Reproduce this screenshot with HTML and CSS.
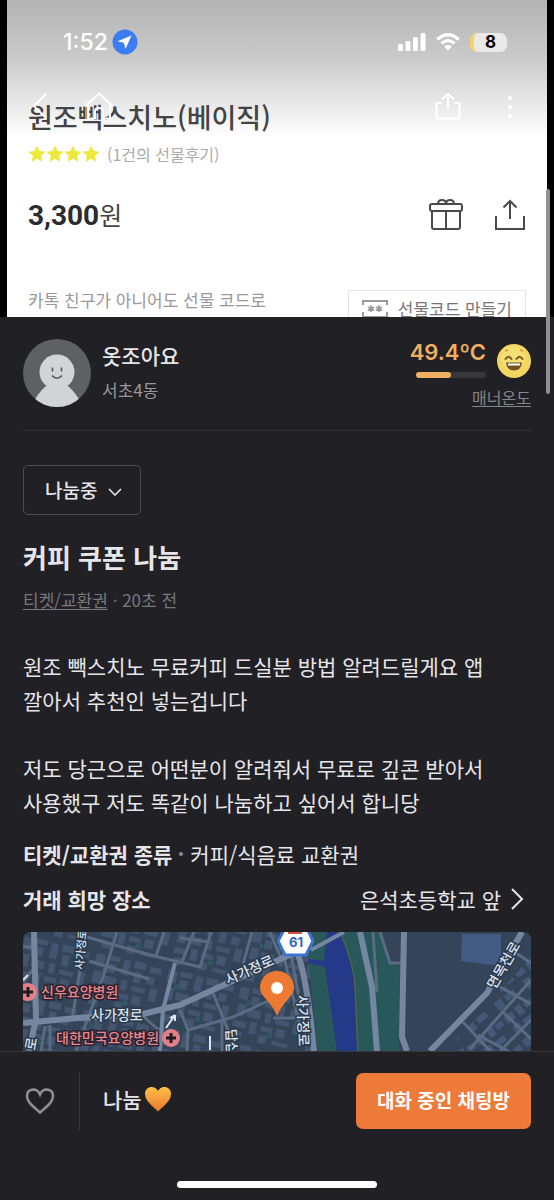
FILE: index.html
```html
<!DOCTYPE html>
<html lang="ko">
<head>
<meta charset="utf-8">
<meta name="viewport" content="width=device-width, initial-scale=1">
<title>커피 쿠폰 나눔</title>
<link rel="stylesheet" href="styles.css">
</head>
<body>
<div class="app">
  <section class="hero">
    <div class="product">
      <h2 class="product-name">원조빽스치노(베이직)</h2>
      <div class="rating">
        <svg class="stars" width="72" height="18" viewBox="0 0 72 18" aria-label="별점 4개">
          <defs><path id="star" d="M9 .5l2.600 5.400 5.900.8-4.300 4.100 1.100 5.900L9 13.800l-5.300 2.900 1.100-5.900L.5 6.700l5.900-.8z"/></defs>
          <g fill="#ece83c"><use href="#star"/><use href="#star" x="18"/><use href="#star" x="36"/><use href="#star" x="54"/></g>
        </svg>
        <span>(1건의 선물후기)</span>
      </div>
      <div class="price-row">
        <p class="price"><b>3,300</b>원</p>
        <svg width="36" height="34" viewBox="0 0 36 34" fill="none" stroke="#4a4a4a" stroke-width="2" aria-hidden="true">
          <rect x="2" y="6" width="32" height="7" rx="2"/><path d="M4 13v16q0 2 2 2h24q2 0 2-2V13M18 13v18M10 6q0-4 4-4t4 4q0-4 4-4t4 4"/>
        </svg>
        <svg class="upload" width="32" height="34" viewBox="0 0 32 34" fill="none" stroke="#4a4a4a" stroke-width="2" aria-hidden="true">
          <path d="M2 18v13h28V18M16 21V3M9.500 9.500L16 3l6.500 6.500"/>
        </svg>
      </div>
      <div class="code-row">
        <p class="code-text">카톡 친구가 아니어도 선물 코드로</p>
        <button class="code-button" type="button">
          <svg width="26" height="20" viewBox="0 0 26 20" fill="none" stroke="#999" stroke-width="2" aria-hidden="true">
            <path d="M1 6V2h24v4M1 13v5h24v-5"/><path d="M9 6v7M6 8l6 3.500M12 8l-6 3.500M17 6v7M14 8l6 3.500M20 8l-6 3.500" stroke-width="1.500"/>
          </svg>
          선물코드 만들기
        </button>
      </div>
    </div>
    <header class="overlay">
      <div class="status">
        <span class="clock">1:52</span>
        <svg width="26" height="26" viewBox="0 0 26 26" aria-hidden="true"><circle cx="13" cy="13" r="12.500" fill="#3b7cf0"/><path d="M19.500 6.500L5.500 12.300l6.300 1.500 1.700 6.200z" fill="#fff"/></svg>
        <span class="spacer"></span>
        <svg width="28" height="18" viewBox="0 0 28 18" fill="#fff" aria-hidden="true"><rect y="11" width="5" height="7" rx="1.500"/><rect x="7.500" y="8" width="5" height="10" rx="1.500"/><rect x="15" y="4" width="5" height="14" rx="1.500"/><rect x="22.500" y="0" width="5" height="18" rx="1.500"/></svg>
        <svg class="wifi" width="24" height="18" viewBox="0 0 24 18" fill="none" stroke="#fff" stroke-width="3.200" aria-hidden="true"><path d="M1.300 6.500Q12-3 22.700 6.500M5.500 10.500Q12 4.800 18.500 10.500"/><path d="M8.200 13.300Q12 10.300 15.800 13.300L12 17.500z" fill="#fff" stroke="none"/></svg>
        <span class="battery">8</span>
      </div>
      <nav class="toolbar">
        <button class="icon-button" type="button" aria-label="뒤로"><svg width="20" height="28" viewBox="0 0 20 28"><path d="M16 2L4 14l12 12"/></svg></button>
        <button class="icon-button home" type="button" aria-label="홈"><svg width="30" height="28" viewBox="0 0 30 28"><path d="M1.500 14L15 1.500 28.500 14M4 12v14.500h7V19q0-3 4-3t4 3v7.500h7V12"/></svg></button>
        <span class="spacer"></span>
        <button class="icon-button" type="button" aria-label="공유"><svg width="26" height="28" viewBox="0 0 26 28"><path d="M7 11H1.500v15.500h23V11H19M13 17V2M7 7.500L13 2l6 5.500"/></svg></button>
        <button class="icon-button more" type="button" aria-label="더보기"><svg width="6" height="28" viewBox="0 0 6 28"><g fill="#fff" stroke="none"><circle cx="3" cy="6" r="2"/><circle cx="3" cy="15" r="2"/><circle cx="3" cy="24" r="2"/></g></svg></button>
      </nav>
    </header>
  </section>

  <main class="content">
    <section class="seller">
      <svg class="avatar" width="68" height="68" viewBox="0 0 68 68" role="img" aria-label="프로필">
        <defs><clipPath id="face"><circle cx="34" cy="34" r="34"/></clipPath></defs>
        <g clip-path="url(#face)"><rect width="68" height="68" fill="#5e6164"/><circle cx="34" cy="33" r="17.500" fill="#d2d3d6"/><path d="M10 64Q15 54 23 47h22q8 7 13 17v6H10z" fill="#d2d3d6"/></g>
        <path d="M29.500 28.500v4M38.500 28.500v4M29 36.500q5 5.500 10 0" fill="none" stroke="#55575a" stroke-width="1.600"/>
      </svg>
      <div class="who"><strong class="nick">옷조아요</strong><span class="area">서초4동</span></div>
      <div class="manner">
        <div class="temp-row">
          <div class="temp"><span class="degree">49.4ºC</span><div class="meter"><div class="meter-fill" style="width:50%"></div></div></div>
          <svg class="mood" width="34" height="36" viewBox="0 0 34 36" role="img" aria-label="웃는 얼굴">
            <circle cx="17" cy="18" r="17" fill="#f3d662"/><circle cx="16" cy="15" r="12" fill="#f9e58a" opacity=".5"/>
            <path d="M8.500 16q3-4.500 6 0M19.500 16q3-4.500 6 0" fill="none" stroke="#7c5b20" stroke-width="2" stroke-linecap="round"/>
            <path d="M9 19.500h16q-1 8-8 8t-8-8z" fill="#75521c"/><path d="M11 20.500h12v2H11z" fill="#fff"/>
            <path d="M8 8l3-1M23 7l3 1" stroke="#c99c3b" stroke-width="1.500"/>
          </svg>
        </div>
        <a class="manner-link" href="#">매너온도</a>
      </div>
    </section>

    <div class="state">
      <select class="state-select" aria-label="거래 상태"><option>나눔중</option><option>예약중</option></select>
      <svg class="state-arrow" width="14" height="8" viewBox="0 0 14 8" aria-hidden="true"><path d="M1 1l6 6 6-6" fill="none" stroke="#e6e6ea" stroke-width="1.600"/></svg>
    </div>
    <h1 class="title">커피 쿠폰 나눔</h1>
    <p class="meta"><a class="category" href="#">티켓/교환권</a> · 20초 전</p>
    <div class="body-text">
      <p>원조 빽스치노 무료커피 드실분 방법 알려드릴게요 앱<br>깔아서 추천인 넣는겁니다</p>
      <p>저도 당근으로 어떤분이 알려줘서 무료로 깊콘 받아서<br>사용했구 저도 똑같이 나눔하고 싶어서 합니당</p>
    </div>
    <p class="detail"><b>티켓/교환권 종류</b><i class="dot"></i><span>커피/식음료 교환권</span></p>
    <div class="detail place">
      <b>거래 희망 장소</b>
      <a class="place-link" href="#">은석초등학교 앞<svg width="14" height="22" viewBox="0 0 14 22" aria-hidden="true"><path d="M2 1l10 10L2 21" fill="none" stroke="#e6e6ea" stroke-width="2"/></svg></a>
    </div>
    <svg class="map" viewBox="0 0 508 119" preserveAspectRatio="xMidYMin slice" role="img" aria-label="거래 희망 장소 지도">
      <defs>
        <pattern id="blocks" width="74" height="58" patternUnits="userSpaceOnUse" patternTransform="rotate(13)">
          <path d="M3 4h9v12H3zM15 3h12v5H15zM16 11h8v9h-8zM31 4h7v15h-7zM42 3h12v7H42zM44 13h7v11h-7zM58 5h12v6H58zM57 15h8v8h-8zM4 21h8v12H4zM15 24h13v8H15zM33 24h6v10h-6zM44 28h14v5H44zM63 26h7v13h-7zM3 38h13v6H3zM20 36h7v12h-7zM31 38h12v5H31zM47 37h9v9h-9zM5 48h9v7H5zM31 47h8v8h-8zM45 50h16v4H45z" fill="#445570"/>
          <path d="M12 16h3v5h-3zM39 44h5v4h-5z" fill="#2d5b5f"/>
        </pattern>
        <pattern id="houses" width="36" height="30" patternUnits="userSpaceOnUse" patternTransform="rotate(-38)"><path d="M2 3h10v8H2zM16 2h7v10h-7zM26 4h8v6h-8zM3 16h8v10H3zM15 17h12v6H15z" fill="#46587a"/></pattern>
      </defs>
      <rect width="508" height="119" fill="#354559"/>
      <rect width="288" height="119" fill="url(#blocks)"/>
      <path d="M508 25L430 112V119H508z" fill="url(#houses)"/>
      <path d="M439 2h39v18l2 14-42-5z" fill="#435c84"/>
      <path d="M283 0H357L367 31 377 35 376 119H295L287 40z" fill="#28585a"/>
      <path d="M304 0h13q14 32 15 55l2 64h-20L302 35l-17-4v-4l16 2z" fill="#243a88"/>
      <path d="M317 0q14 32 15 55l3 64" fill="none" stroke="#52634c" stroke-width="1.500"/>
      <g fill="none" stroke="#596c83" stroke-width="3">
        <path d="M94 0L80 45 53 119M64 5l63 18 50 12L188 0M141 0l-8 24M171 0l-12 30M157 6l29 4M229 0l-9 32M57 38L49 88M66 29l60 18M27 119V93M0 15h10M0 50l12-15M157 78l8 20-1 22M165 98l45-13 44-20M190 61l20 49M120 84l22 20M247 0l10 24M260 20l18 80M268 23l16 85M250 86h28M199 119v-30M22 94l-4 25"/>
        <path d="M357 0l10 31h13M350 0l4 60M440 90l27 29M477 55l31 17M493 21l15 10M508 48l-61 69M508 88l-31 31M455 103l30 16M480 80l28 27"/>
      </g>
      <g fill="none" stroke="#7587a0" stroke-width="6">
        <path d="M11 0l2 87-7 32M0 91l54-5 66-4 37-9L262 25l26-11"/><path d="M152 31l-12 47-3 41" stroke-width="4"/>
        <path d="M270 10q13 24 21 109M337 0l12 55 5 64M381 0l-2 105 5 14M499 0l-35 61-57 58"/><path d="M288 18L321 0" stroke-width="4"/>
      </g>
      <path d="M0 48l5-5M143 96l9-13-5 3m5-3v6M187 118v-14" stroke="#dce5f1" stroke-width="2" fill="none"/>
      <g class="map-label">
        <text transform="translate(60 38) rotate(-85)" font-size="11">사가정로</text>
        <text x="68" y="88">사가정로</text>
        <text transform="translate(205 53) rotate(-24)">사가정로</text>
        <text transform="translate(274 63) rotate(88)">사가정로</text>
        <text transform="translate(203 97) rotate(88)">답십</text>
        <text transform="translate(472 58) rotate(-60)">면목천로</text>
        <text transform="translate(12 119) rotate(-80)">로</text>
      </g>
      <g class="map-hospital"><text x="18" y="65">신우요양병원</text><text x="33" y="111">대한민국요양병원</text></g>
      <g fill="#e57f87"><circle cx="5" cy="60" r="9"/><circle cx="148" cy="106" r="9"/></g>
      <path d="M0 60h10M5 55v10M143 106h10M148 101v10" stroke="#1c1c22" stroke-width="3"/>
      <path d="M262-4h22l6 13-7 14h-21l-7-14z" fill="#fff" stroke="#3c73cc" stroke-width="3"/><path d="M265 0h14v2h-14z" fill="#d5523f"/>
      <text class="map-route" x="273" y="15" text-anchor="middle">61</text>
      <path d="M254 84Q251 76 242 66q-5-5-5-11a17 16 0 0134 0q0 6-5 11-9 10-12 18z" fill="#ee7a31"/><circle cx="254" cy="56" r="6" fill="#fff"/>
    </svg>
  </main>

  <footer class="footer">
    <div class="actions">
      <button class="icon-button like" type="button" aria-label="관심"><svg width="30" height="28" viewBox="0 0 30 28"><path d="M15 25.500C9 20 2 15.500 2 9q0-6 6-6.500 5 0 7 5 2-5 7-5 6 .5 6 6.500c0 6.500-7 11-13 16.500z"/></svg></button>
      <p class="share">나눔<svg width="28" height="28" viewBox="0 0 28 28" role="img" aria-label="주황색 하트"><defs><linearGradient id="warm" x2="0" y2="1"><stop stop-color="#ffc247"/><stop offset="1" stop-color="#e9762b"/></linearGradient></defs><path d="M14 26.500C8 20.500 1 16 1 8.500 1 1 11-.5 14 6c3-6.500 13-5 13 2.500C27 16 20 20.500 14 26.500z" fill="url(#warm)"/></svg></p>
      <button class="chat" type="button">대화 중인 채팅방</button>
    </div>
    <div class="home-bar"></div>
  </footer>
  <div class="scroll-thumb"></div>
</div>
</body>
</html>
```

FILE: styles.css
```css
* { box-sizing: border-box; }

body {
  margin: 0;
  background: #212025;
  color: #e6e6ea;
  font-family: "Noto Sans CJK KR", sans-serif;
}

h1, h2, p { margin: 0; }
button, select { font-family: inherit; }
svg { flex: none; }

.app {
  position: relative;
  min-height: 100vh;
  display: flex;
  flex-direction: column;
}

.spacer { flex: 1; }

/* Photo area */
.hero {
  position: relative;
  height: 317px;
  overflow: hidden;
  border: solid #000;
  border-width: 0 7px;
  background: linear-gradient(#b3b3b3, #cbcbcb 60px, #e6e6e6 100px, #fff 137px);
}

.product { padding: 98px 21px 0; color: #444; }
.product-name { font-size: 27px; line-height: 38px; font-weight: 500; }

.rating {
  display: flex;
  align-items: center;
  gap: 7px;
  margin-top: 6px;
  font-size: 16px;
  line-height: 24px;
  color: #aaa;
}

.price-row { display: flex; align-items: center; margin-top: 30px; }
.price { flex: 1; font-size: 25px; line-height: 36px; }
.price b { font-family: Roboto, sans-serif; font-size: 28px; color: #2c2c2e; }
.upload { margin-left: 30px; }

.code-row {
  display: flex;
  justify-content: space-between;
  align-items: flex-start;
  margin-top: 53px;
}
.code-text { font-size: 17px; line-height: 26px; color: #999; }
.code-button {
  display: flex;
  align-items: center;
  gap: 10px;
  height: 38px;
  margin-top: 3px;
  padding: 0 13px;
  border: 1px solid #e4e4e4;
  background: #fff;
  font-size: 17px;
  line-height: 20px;
  color: #777;
}

.overlay { position: absolute; inset: 0 0 auto; }
.status {
  display: flex;
  align-items: center;
  height: 84px;
  padding: 0 40px 0 56px;
  color: #fff;
}
.clock { margin-right: 4px; font: 500 23px/28px Inter, sans-serif; }
.wifi { margin: 0 10px; }
.battery {
  width: 37px;
  border-left: 4px solid #f4d263;
  border-radius: 7px;
  background: #e9e9e9;
  color: #000;
  font: 700 17px/19px Inter, sans-serif;
  text-align: center;
}

.toolbar { display: flex; align-items: center; margin-top: 8px; padding: 0 34px 0 23px; }
.icon-button {
  display: flex;
  padding: 0;
  border: 0;
  background: none;
  fill: none;
  stroke: #fff;
  stroke-width: 2;
}
.home { margin-left: 34px; }
.more { margin-left: 46px; }

/* Post */
.content { padding: 0 23px; }

.seller {
  display: flex;
  align-items: flex-start;
  padding: 22px 0;
  border-bottom: 1px solid #313136;
}
.who { display: flex; flex-direction: column; gap: 7px; flex: 1; margin: 1px 0 0 11px; }
.nick { font-size: 21px; line-height: 30px; font-weight: 500; }
.area { font-size: 17px; line-height: 26px; color: #97979c; }

.manner { display: flex; flex-direction: column; align-items: flex-end; }
.temp-row { display: flex; align-items: flex-start; gap: 11px; }
.temp { display: flex; flex-direction: column; align-items: flex-end; gap: 7px; }
.degree { font: 600 22px/26px Inter, sans-serif; color: #eeb062; }
.mood { margin-top: 4px; }
.meter { width: 70px; height: 6px; border-radius: 3px; background: #37373c; }
.meter-fill { height: 100%; border-radius: 3px; background: #eeb062; }
.manner-link {
  margin-top: 7px;
  font-size: 16px;
  line-height: 22px;
  color: #85858a;
  text-underline-offset: 2px;
}

.state { position: relative; width: max-content; margin-top: 34px; }
.state-select {
  appearance: none;
  height: 50px;
  padding: 0 42px 2px 21px;
  border: 1px solid #4c4c51;
  border-radius: 5px;
  background: none;
  color: #e6e6ea;
  font-size: 19px;
  font-weight: 500;
}
.state-arrow { position: absolute; right: 19px; top: 23px; pointer-events: none; }

.title { margin-top: 25px; font-size: 26px; line-height: 34px; font-weight: 700; }
.meta { margin-top: 14px; font-size: 17px; line-height: 24px; color: #77777c; }
.category { color: inherit; text-underline-offset: 2px; }

.body-text {
  display: flex;
  flex-direction: column;
  gap: 34px;
  margin-top: 37px;
  font-size: 21px;
  line-height: 34px;
}

.detail {
  display: flex;
  align-items: center;
  margin-top: 18px;
  font-size: 21px;
  line-height: 34px;
}
.dot { width: 4px; height: 4px; margin: 0 7px; border-radius: 50%; background: #8b8b90; }
.place { justify-content: space-between; margin-top: 11px; }
.place-link {
  display: flex;
  align-items: center;
  gap: 9px;
  padding-right: 7px;
  color: inherit;
  text-decoration: none;
}

.map {
  display: block;
  width: 100%;
  height: 119px;
  margin-top: 16px;
  border-radius: 7px 7px 0 0;
}
.map-label {
  font-size: 14px;
  font-weight: 500;
  fill: #d8e2f0;
  stroke: #2c394c;
  stroke-width: 3px;
  paint-order: stroke;
}
.map-hospital {
  font-size: 14px;
  font-weight: 500;
  fill: #ea858d;
  stroke: #29222e;
  stroke-width: 3px;
  paint-order: stroke;
}
.map-route { font: 700 13px Inter, sans-serif; fill: #3567b8; }

/* Bottom bar */
.footer {
  flex: 1;
  display: flex;
  flex-direction: column;
  justify-content: space-between;
  border-top: 1px solid #37373c;
}
.actions { display: flex; align-items: center; padding: 20px 23px 0 25px; }
.like { align-items: center; height: 58px; padding-right: 24px; border-right: 1px solid #38383d; stroke: #8f8f94; stroke-width: 2.5; }
.share { display: flex; align-items: center; flex: 1; gap: 2px; padding: 0 0 5px 23px; font-size: 21px; line-height: 30px; font-weight: 500; }
.chat {
  height: 56px;
  padding: 0 21px 4px;
  border: 0;
  border-radius: 7px;
  background: #ee7a3a;
  color: #fff;
  font-size: 19px;
  font-weight: 700;
}
.home-bar { width: 36%; height: 7px; margin: 0 auto 12px; border-radius: 4px; background: #fff; }

.scroll-thumb {
  position: absolute;
  top: 189px;
  right: 4px;
  width: 4px;
  height: 205px;
  border-radius: 2px;
  background: #919194;
}
```
